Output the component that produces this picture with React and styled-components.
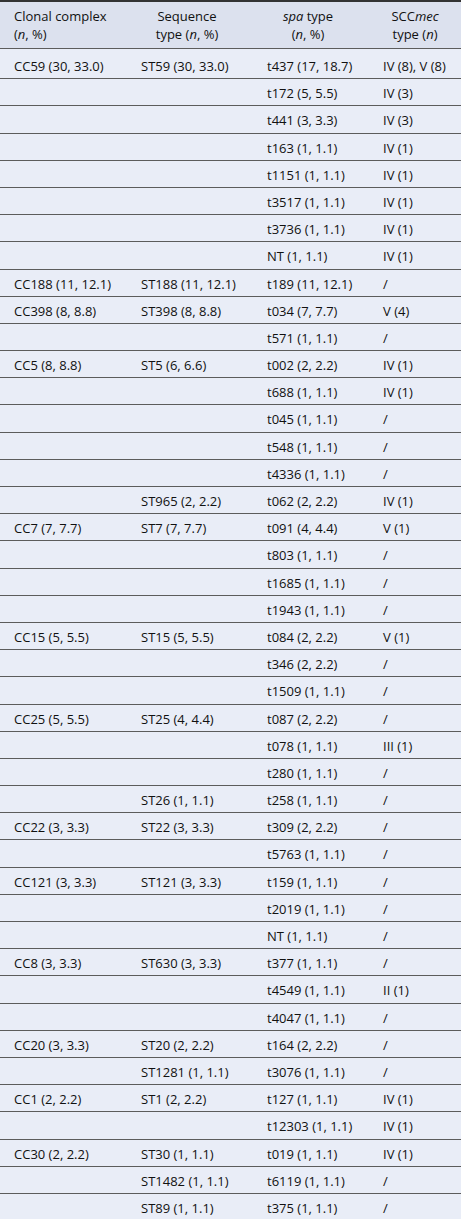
import React from 'react';
import styled, { createGlobalStyle } from 'styled-components';

const GlobalStyle = createGlobalStyle`
  html, body {
    margin: 0;
    padding: 0;
    background: #e9edf7;
  }
`;

const Table = styled.table`
  width: 461px;
  border-collapse: collapse;
  table-layout: fixed;
  font-family: "Open Sans", "Noto Sans", sans-serif;
  font-size: 13px;
  color: #111;
  background: #e9edf7;
  border-top: 2px solid #333;
  border-bottom: 2px solid #111;
`;

const Head = styled.thead`
  background: #dce1ee;
`;

const Th = styled.th`
  font-weight: 400;
  line-height: 18px;
  padding: 5px ${(p) => p.padRight || 14}px 5px 14px;
  text-align: ${(p) => (p.left ? 'left' : 'center')};
  vertical-align: top;
  border-bottom: 1px solid #5c5c5c;
`;

const Tr = styled.tr`
  border-bottom: 1px solid #5c5c5c;

  &:last-child {
    border-bottom: none;
  }
`;

const Td = styled.td`
  line-height: 18px;
  padding: ${(p) => (p.first ? '8px' : '5px')} 14px 3.2px 14px;
  white-space: nowrap;
`;

const rows = [
  ['CC59 (30, 33.0)', 'ST59 (30, 33.0)', 't437 (17, 18.7)', 'IV (8), V (8)'],
  ['', '', 't172 (5, 5.5)', 'IV (3)'],
  ['', '', 't441 (3, 3.3)', 'IV (3)'],
  ['', '', 't163 (1, 1.1)', 'IV (1)'],
  ['', '', 't1151 (1, 1.1)', 'IV (1)'],
  ['', '', 't3517 (1, 1.1)', 'IV (1)'],
  ['', '', 't3736 (1, 1.1)', 'IV (1)'],
  ['', '', 'NT (1, 1.1)', 'IV (1)'],
  ['CC188 (11, 12.1)', 'ST188 (11, 12.1)', 't189 (11, 12.1)', '/'],
  ['CC398 (8, 8.8)', 'ST398 (8, 8.8)', 't034 (7, 7.7)', 'V (4)'],
  ['', '', 't571 (1, 1.1)', '/'],
  ['CC5 (8, 8.8)', 'ST5 (6, 6.6)', 't002 (2, 2.2)', 'IV (1)'],
  ['', '', 't688 (1, 1.1)', 'IV (1)'],
  ['', '', 't045 (1, 1.1)', '/'],
  ['', '', 't548 (1, 1.1)', '/'],
  ['', '', 't4336 (1, 1.1)', '/'],
  ['', 'ST965 (2, 2.2)', 't062 (2, 2.2)', 'IV (1)'],
  ['CC7 (7, 7.7)', 'ST7 (7, 7.7)', 't091 (4, 4.4)', 'V (1)'],
  ['', '', 't803 (1, 1.1)', '/'],
  ['', '', 't1685 (1, 1.1)', '/'],
  ['', '', 't1943 (1, 1.1)', '/'],
  ['CC15 (5, 5.5)', 'ST15 (5, 5.5)', 't084 (2, 2.2)', 'V (1)'],
  ['', '', 't346 (2, 2.2)', '/'],
  ['', '', 't1509 (1, 1.1)', '/'],
  ['CC25 (5, 5.5)', 'ST25 (4, 4.4)', 't087 (2, 2.2)', '/'],
  ['', '', 't078 (1, 1.1)', 'III (1)'],
  ['', '', 't280 (1, 1.1)', '/'],
  ['', 'ST26 (1, 1.1)', 't258 (1, 1.1)', '/'],
  ['CC22 (3, 3.3)', 'ST22 (3, 3.3)', 't309 (2, 2.2)', '/'],
  ['', '', 't5763 (1, 1.1)', '/'],
  ['CC121 (3, 3.3)', 'ST121 (3, 3.3)', 't159 (1, 1.1)', '/'],
  ['', '', 't2019 (1, 1.1)', '/'],
  ['', '', 'NT (1, 1.1)', '/'],
  ['CC8 (3, 3.3)', 'ST630 (3, 3.3)', 't377 (1, 1.1)', '/'],
  ['', '', 't4549 (1, 1.1)', 'II (1)'],
  ['', '', 't4047 (1, 1.1)', '/'],
  ['CC20 (3, 3.3)', 'ST20 (2, 2.2)', 't164 (2, 2.2)', '/'],
  ['', 'ST1281 (1, 1.1)', 't3076 (1, 1.1)', '/'],
  ['CC1 (2, 2.2)', 'ST1 (2, 2.2)', 't127 (1, 1.1)', 'IV (1)'],
  ['', '', 't12303 (1, 1.1)', 'IV (1)'],
  ['CC30 (2, 2.2)', 'ST30 (1, 1.1)', 't019 (1, 1.1)', 'IV (1)'],
  ['', 'ST1482 (1, 1.1)', 't6119 (1, 1.1)', '/'],
  ['', 'ST89 (1, 1.1)', 't375 (1, 1.1)', '/'],
];

export default function App() {
  return (
    <>
      <GlobalStyle />
      <Table>
        <colgroup>
          <col style={{ width: 127 }} />
          <col style={{ width: 126 }} />
          <col style={{ width: 116 }} />
          <col />
        </colgroup>
        <Head>
          <tr>
            <Th left>
              Clonal complex
              <br />
              (<i>n</i>, %)
            </Th>
            <Th padRight={20}>
              Sequence
              <br />
              type (<i>n</i>, %)
            </Th>
            <Th padRight={20}>
              <i>spa</i> type
              <br />
              (<i>n</i>, %)
            </Th>
            <Th>
              SCC<i>mec</i>
              <br />
              type (<i>n</i>)
            </Th>
          </tr>
        </Head>
        <tbody>
          {rows.map((r, i) => (
            <Tr key={i}>
              {r.map((c, j) => (
                <Td key={j} first={i === 0}>
                  {c}
                </Td>
              ))}
            </Tr>
          ))}
        </tbody>
      </Table>
    </>
  );
}
